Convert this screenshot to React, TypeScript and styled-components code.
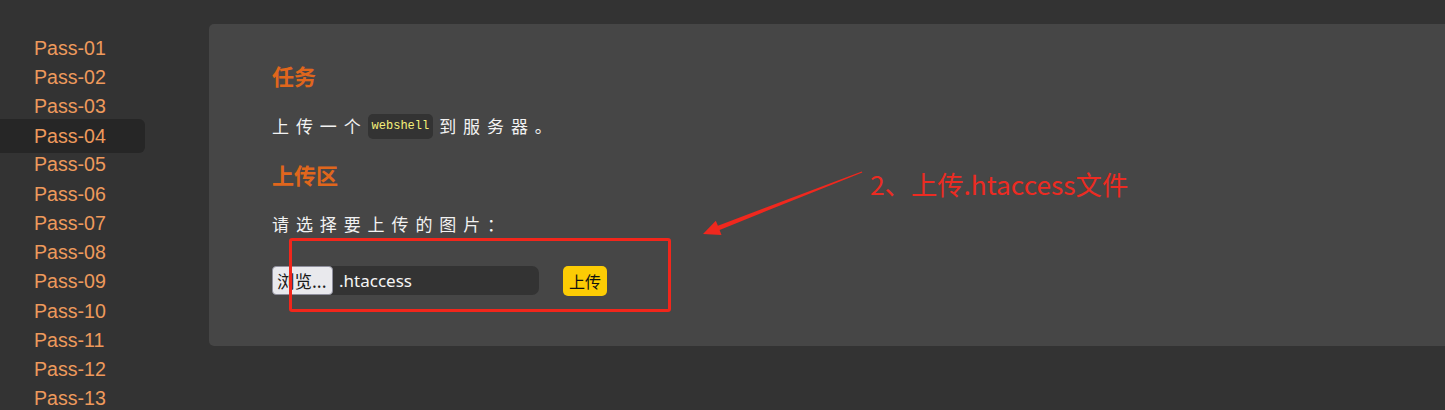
import React from "react";
import styled, { createGlobalStyle } from "styled-components";

const Global = createGlobalStyle`
  html, body { margin: 0; padding: 0; background: #333333; }
  body { font-family: "Liberation Sans", Arial, sans-serif; overflow: hidden; }
  * { box-sizing: border-box; }
`;

const Page = styled.div`
  position: relative;
  display: flex;
  align-items: flex-start;
  width: 1445px;
  height: 410px;
  background: #333333;
  overflow: hidden;
`;

const Sidebar = styled.nav`
  width: 145px;
  flex: none;
  padding-top: 33.5px;
  display: flex;
  flex-direction: column;
`;

const NavItem = styled.a<{ $active?: boolean }>`
  display: block;
  padding: 0 0 0 34px;
  height: 29.25px;
  line-height: 29.25px;
  font-size: 19.6px;
  color: #ee9a5c;
  text-decoration: none;
  border-radius: 0 6px 6px 0;
  ${(p) =>
    p.$active &&
    `
    background: #262626;
    height: 34px;
    line-height: 34px;
    margin: -2.4px 0;
  `}
`;

const Panel = styled.main`
  flex: 1;
  margin: 24px -10px 0 64px;
  background: #464646;
  border-radius: 5px;
  padding: 35px 63px 50px;
  font-family: "Noto Sans CJK SC", "Liberation Sans", sans-serif;
`;

const Heading = styled.h2`
  margin: 0;
  font-size: 22px;
  line-height: 32px;
  font-weight: 700;
  color: #e0661c;
`;

const Text = styled.p<{ $gap: number }>`
  margin: ${(p) => p.$gap}px 0 0;
  font-size: 17px;
  line-height: 30px;
  letter-spacing: 6.9px;
  color: #f2f2f2;
  display: flex;
  align-items: center;
`;

const Code = styled.code`
  font-family: "Liberation Mono", "DejaVu Sans Mono", monospace;
  font-size: 12px;
  letter-spacing: 0;
  color: #f5f07a;
  background: #333333;
  border-radius: 5px;
  padding: 0 4px;
  height: 25px;
  line-height: 25px;
  margin: 0 6px 0 0;
`;

const SectionHeading = styled(Heading)`
  margin-top: 17px;
`;

const FormRow = styled.div`
  margin-top: 26px;
  display: flex;
  align-items: center;
  height: 31px;
`;

const FileBox = styled.div`
  display: flex;
  align-items: center;
  width: 267px;
  height: 29px;
  background: #333333;
  border-radius: 4px 7px 7px 4px;
`;

const BrowseButton = styled.span`
  height: 29px;
  width: 61px;
  padding: 0 0 0 4px;
  display: flex;
  align-items: center;
  font-size: 17.5px;
  color: #1a1a1a;
  background: #e9e9ed;
  border: 1px solid #8f8f9d;
  border-radius: 4px;
  white-space: nowrap;
  overflow: hidden;
`;

const FileName = styled.span`
  margin-left: 6px;
  font-size: 17px;
  color: #f5f5f5;
  font-family: "Noto Sans", "Liberation Sans", sans-serif;
`;

const UploadButton = styled.button`
  margin-left: 24px;
  height: 30px;
  padding: 0 6px;
  border: none;
  border-radius: 5px;
  background: #fccc04;
  color: #111;
  font-family: "Noto Sans CJK SC", sans-serif;
  font-size: 16px;
  line-height: 30px;
`;

const RedBox = styled.div`
  position: absolute;
  left: 289px;
  top: 238px;
  width: 382px;
  height: 74px;
  border: 3px solid #f2261b;
  border-radius: 3px;
  pointer-events: none;
`;

const ArrowSvg = styled.svg`
  position: absolute;
  left: 690px;
  top: 150px;
  pointer-events: none;
`;

const Note = styled.div`
  position: absolute;
  left: 870px;
  top: 164px;
  font-family: "Noto Sans CJK SC", "Noto Sans", sans-serif;
  font-size: 26.3px;
  line-height: 40px;
  color: #ec2b22;
  white-space: nowrap;
`;

const passes = Array.from({ length: 13 }, (_, i) => `Pass-${String(i + 1).padStart(2, "0")}`);

export default function App() {
  return (
    <>
      <Global />
      <Page>
        <Sidebar>
          {passes.map((p) => (
            <NavItem key={p} href="#" $active={p === "Pass-04"}>
              {p}
            </NavItem>
          ))}
        </Sidebar>
        <Panel>
          <Heading>任务</Heading>
          <Text $gap={20}>
            上传一个<Code>webshell</Code>到服务器。
          </Text>
          <SectionHeading>上传区</SectionHeading>
          <Text $gap={19}>请选择要上传的图片：</Text>
          <FormRow>
            <FileBox>
              <BrowseButton>浏览...</BrowseButton>
              <FileName>.htaccess</FileName>
            </FileBox>
            <UploadButton>上传</UploadButton>
          </FormRow>
        </Panel>
        <RedBox />
        <ArrowSvg width="190" height="100" viewBox="0 0 190 100">
          <polygon
            points="13,84 31.5,85 29.6,79.9 172.3,22.4 171.8,21.6 27.9,75.7 25.8,70.8"
            fill="#f0281e"
          />
        </ArrowSvg>
        <Note>2、上传.htaccess文件</Note>
      </Page>
    </>
  );
}
